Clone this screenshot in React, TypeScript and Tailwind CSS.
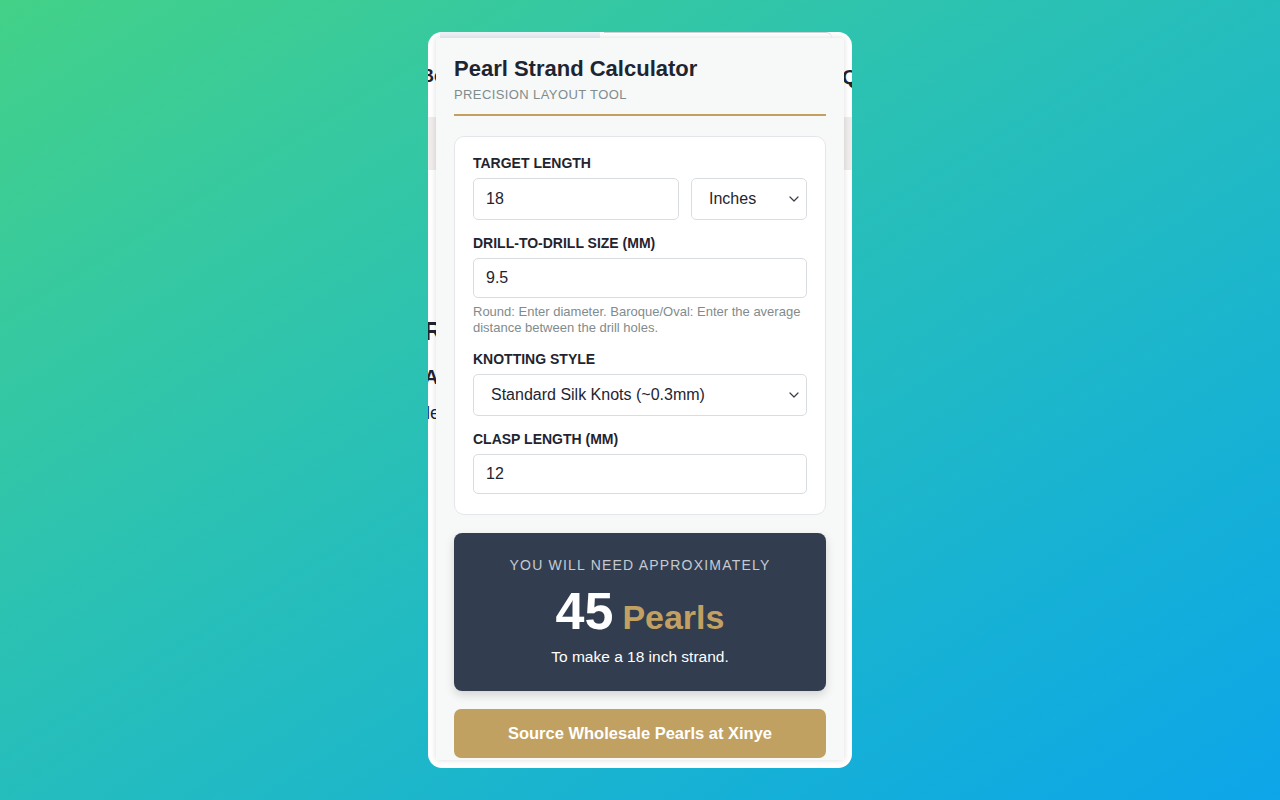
import React from 'react'

const labelCls = 'block text-[14px] leading-4 font-bold text-[#1f2430] mb-[7px]'
const inputCls =
  'w-full h-[40px] rounded-[5px] border border-[#d9dde1] bg-white px-3 text-[16px] text-[#1f2430] outline-none'

function Chevron() {
  return (
    <svg
      className="pointer-events-none absolute right-[8px] top-1/2 -translate-y-1/2"
      width="10"
      height="6"
      viewBox="0 0 10 6"
      fill="none"
    >
      <path d="M1 1l4 4 4-4" stroke="#3a3f47" strokeWidth="1.2" strokeLinecap="round" strokeLinejoin="round" />
    </svg>
  )
}

function Select({value, options, className}: {value: string; options: string[]; className?: string}) {
  return (
    <div className={`relative ${className || ''}`}>
      <select
        defaultValue={value}
        className="w-full h-[42px] appearance-none rounded-[5px] border border-[#d9dde1] bg-white pl-[17px] pr-8 text-[16px] text-[#1f2430] outline-none"
      >
        {options.map((o) => (
          <option key={o}>{o}</option>
        ))}
      </select>
      <Chevron />
    </div>
  )
}

// the page that sits behind the calculator panel, only its edges show
function BackgroundPage() {
  return (
    <div className="text-[#1f2430]">
      <div className="flex h-[6px]">
        <div className="ml-[12px] w-[160px] bg-[#eef0f8]" />
        <div className="ml-[4px] flex-1 mr-[20px] rounded-tr-full border-t border-[#cfd2d6]" />
      </div>
      <div className="flex h-[79px] items-center justify-between pb-[2px]">
        <span className="-ml-[7px] text-[18px] font-semibold">Bo</span>
        <span className="-mr-[6px] text-[21px] font-bold">Q</span>
      </div>
      <div className="h-[53px] bg-[#efeceb]" />
      <div className="flex flex-col pt-[145px]">
        <span className="-ml-[4px] text-[26px] font-bold leading-[32px]">R</span>
        <span className="-ml-[4px] mt-[16px] text-[20px] font-bold leading-[28px]">A</span>
        <span className="-ml-[2px] mt-[10px] text-[18px] leading-[24px]">le</span>
      </div>
    </div>
  )
}

export default function App() {
  return (
    <div className="flex h-screen w-full items-center justify-center bg-gradient-to-br from-[#43d187] to-[#0ea5e9] font-['Liberation_Sans',Arial,sans-serif]">
      <div className="relative h-[736px] w-[424px] overflow-hidden rounded-[14px] bg-white">
        <BackgroundPage />

        <div className="absolute left-[8px] top-[6px] h-[722px] w-[408px] overflow-hidden bg-[#f7f8f8] px-[18px] pt-[17px] shadow-[0_0_6px_rgba(0,0,0,0.14)]">
          <div className="border-b-2 border-[#c2a062] pb-[10px]">
            <h1 className="text-[22px] leading-[28px] font-bold text-[#1e2532]">Pearl Strand Calculator</h1>
            <p className="mt-[3px] text-[13px] leading-[18px] tracking-[0.4px] text-[#7f8c8d]">
              PRECISION LAYOUT TOOL
            </p>
          </div>

          <div className="mt-[20px] rounded-[10px] border border-[#e4e6e9] bg-white px-[18px] pt-[18px] pb-[20px]">
            <label className={labelCls}>TARGET LENGTH</label>
            <div className="flex gap-3">
              <input defaultValue="18" className={`${inputCls} !h-[42px] flex-1`} />
              <Select value="Inches" options={['Inches', 'Centimeters']} className="w-[116px]" />
            </div>

            <label className={`${labelCls} mt-[15px]`}>DRILL-TO-DRILL SIZE (MM)</label>
            <input defaultValue="9.5" className={inputCls} />
            <p className="mt-[6px] text-[13px] leading-4 text-[#7f8c8d]">
              Round: Enter diameter. Baroque/Oval: Enter the average distance between the drill holes.
            </p>

            <label className={`${labelCls} mt-[15px]`}>KNOTTING STYLE</label>
            <Select
              value="Standard Silk Knots (~0.3mm)"
              options={['Standard Silk Knots (~0.3mm)', 'No Knots', 'Large Knots (~0.5mm)']}
            />

            <label className={`${labelCls} mt-[15px]`}>CLASP LENGTH (MM)</label>
            <input defaultValue="12" className={inputCls} />
          </div>

          <div className="mt-[18px] rounded-[8px] bg-[#323e50] px-4 pt-[22px] pb-[24px] text-center shadow-[0_4px_10px_rgba(0,0,0,0.15)]">
            <p className="text-[14px] leading-5 tracking-[1.2px] text-[#c5cad2]">YOU WILL NEED APPROXIMATELY</p>
            <div className="mt-[10px] flex h-[52px] items-baseline justify-center gap-[9px] font-bold">
              <span className="text-[52px] leading-none text-white">45</span>
              <span className="text-[34px] leading-none text-[#c2a062]">Pearls</span>
            </div>
            <p className="mt-[10px] text-[15.5px] leading-5 text-white">To make a 18 inch strand.</p>
          </div>

          <button className="mt-[18px] h-[49px] w-full rounded-[7px] bg-[#c1a162] text-[16.5px] font-bold text-white">
            Source Wholesale Pearls at Xinye
          </button>
        </div>
      </div>
    </div>
  )
}
